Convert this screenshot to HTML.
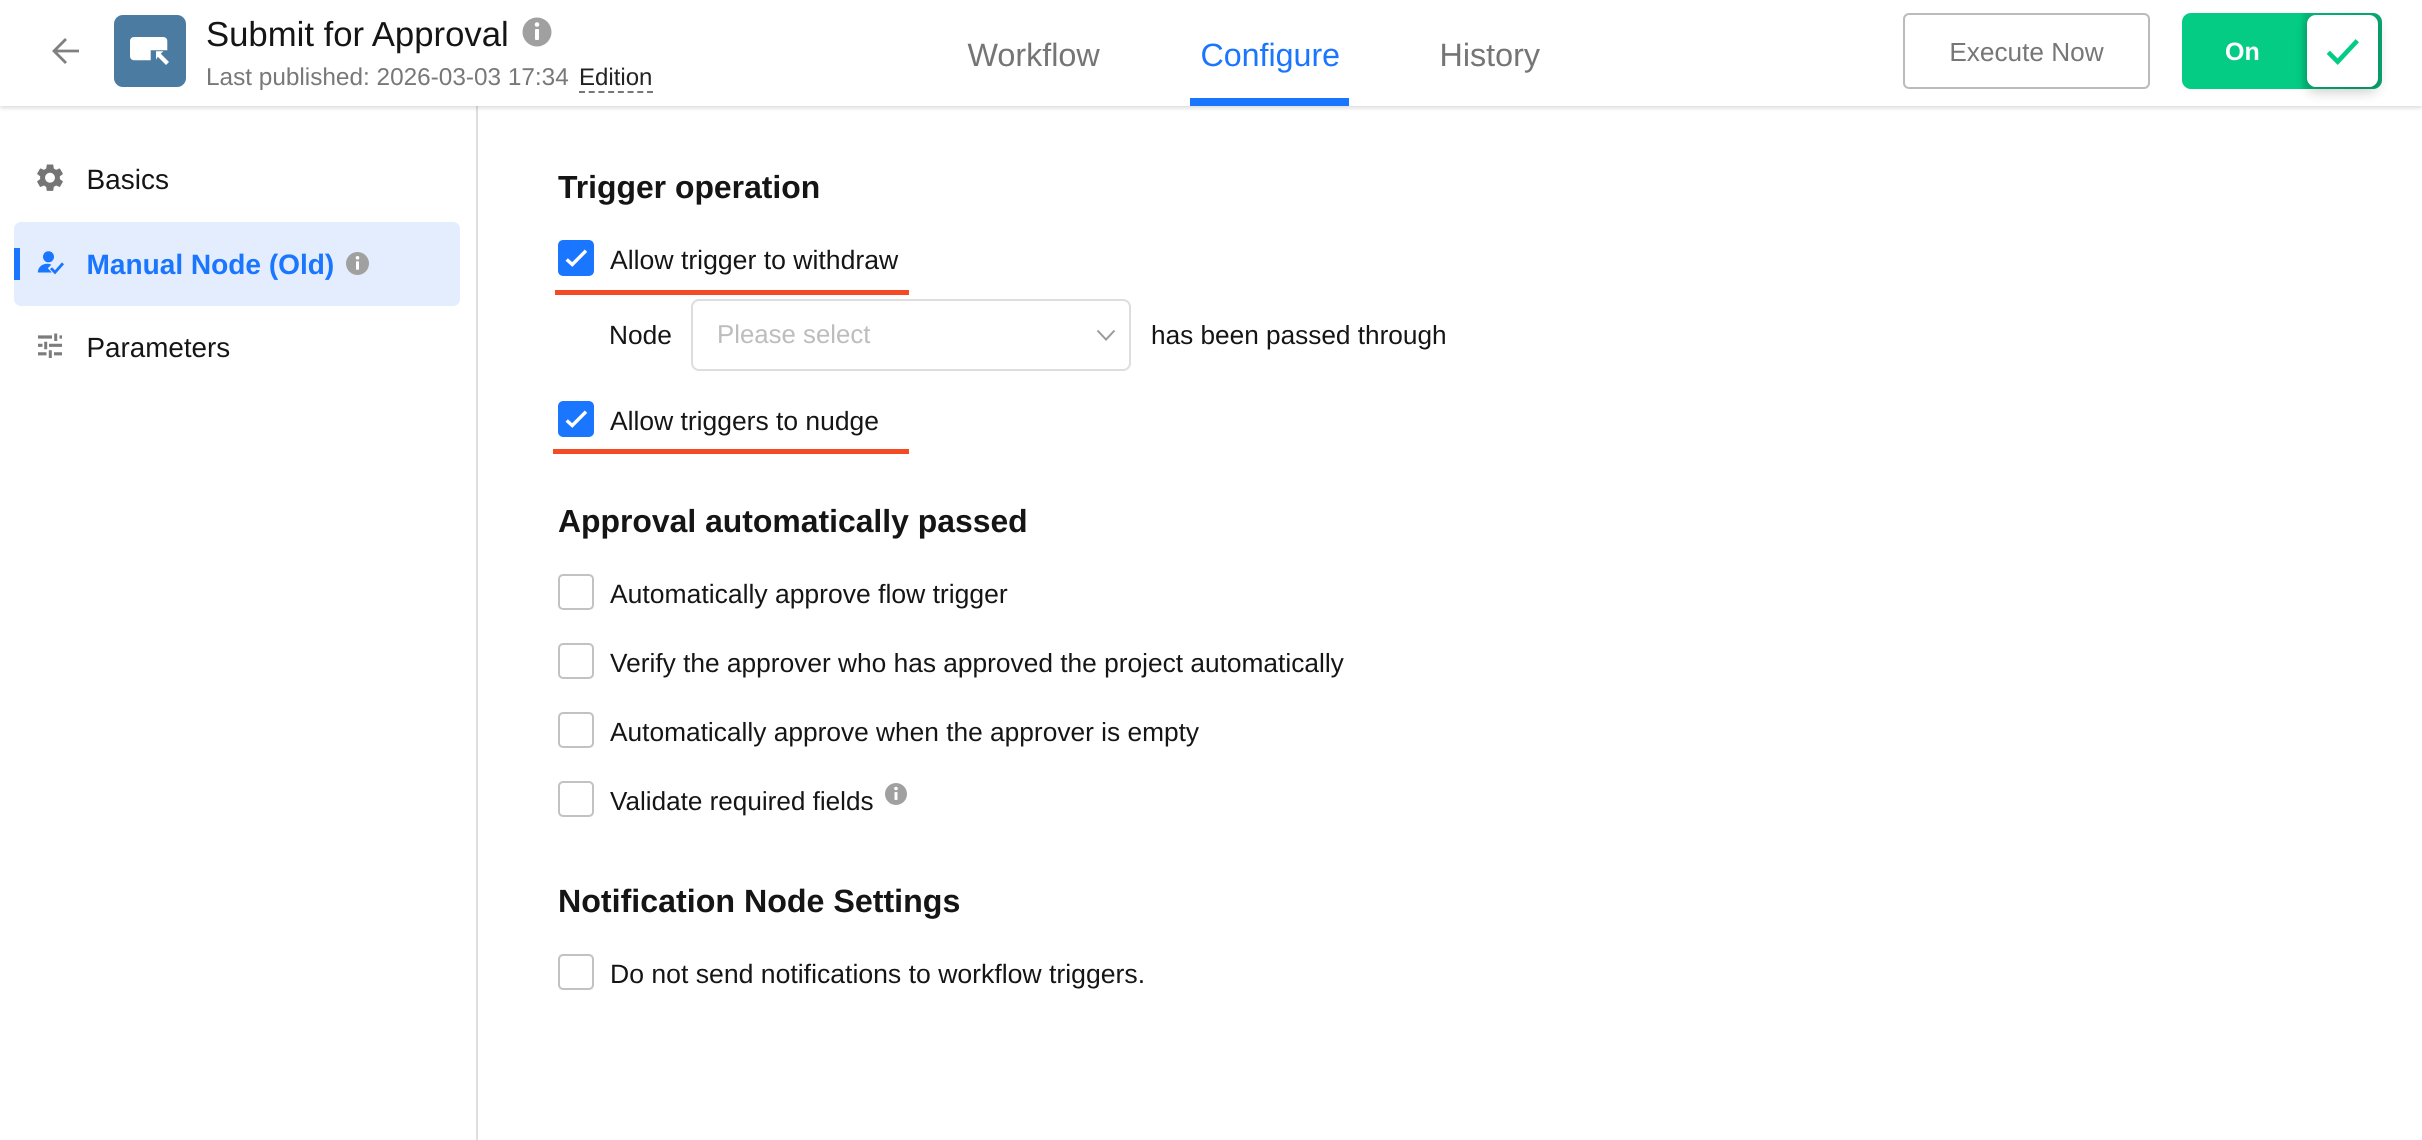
<!DOCTYPE html>
<html lang="en">
<head>
<meta charset="utf-8">
<title>Submit for Approval</title>
<style>
html,body{margin:0;padding:0;background:#fff;width:2422px;height:1140px;overflow:hidden}
body{position:relative;font-family:"Liberation Sans",Arial,sans-serif;color:#151515;text-rendering:geometricPrecision;-webkit-font-smoothing:antialiased}
.t{position:absolute;line-height:0;white-space:nowrap}
.l{font-size:26.3px}
.h{font-size:31.9px;font-weight:700}
.b{position:absolute}
.cb{position:absolute;left:558px;width:36px;height:36px;box-sizing:border-box;border:2px solid #c2c2c2;border-radius:5px;background:#fff}
.cb.on{background:#1a75ff;border-color:#1a75ff}
svg{position:absolute;left:0;top:0}
</style>
</head>
<body>
<div class="b" style="left:0;top:0;width:2422px;height:106px;background:#fff;box-shadow:0 2px 4px rgba(0,0,0,.14);z-index:1"></div>
<div class="b" style="left:476px;top:106px;width:2px;height:1034px;background:#dedede"></div>

<div class="b" style="left:114px;top:15px;width:72px;height:72px;border-radius:9px;background:#4b7ba1;z-index:2"></div>
<div class="t" style="z-index:2;left:206px;top:34.7px;font-size:34.7px">Submit for Approval</div>
<div class="t" style="z-index:2;left:206px;top:78.2px;font-size:24.35px;color:#787878">Last published: 2026-03-03 17:34</div>
<div class="t" style="z-index:2;left:579px;top:78.2px;font-size:24px;color:#222">Edition</div>
<div class="b" style="z-index:2;left:579px;top:91px;width:74px;height:0;border-top:2px dashed #777"></div>

<div class="t" style="z-index:2;left:967.500px;top:54.8px;font-size:32.3px;color:#757575">Workflow</div>
<div class="t" style="z-index:2;left:1200.500px;top:54.8px;font-size:32.2px;color:#1a75ff">Configure</div>
<div class="t" style="z-index:2;left:1439.500px;top:54.8px;font-size:32.3px;color:#757575">History</div>
<div class="b" style="z-index:2;left:1190px;top:98px;width:159px;height:8px;background:#1a75ff"></div>

<div class="b" style="z-index:2;left:1903px;top:13px;width:247px;height:76px;box-sizing:border-box;border:2px solid #bbb;border-radius:6px;background:#fff;color:#777;font-size:26.2px;line-height:74px;text-align:center">Execute Now</div>
<div class="b" style="z-index:2;left:2182px;top:13px;width:200px;height:76px;border-radius:9px;background:linear-gradient(90deg,#04cc84 0,#04cc84 118px,#05b878 124px,#0ba674 200px)"></div>
<div class="t" style="z-index:2;left:2225px;top:52px;font-size:25px;font-weight:700;color:#fff">On</div>
<div class="b" style="z-index:2;left:2307px;top:15px;width:71px;height:72px;border-radius:9px;background:#fff;box-shadow:0 5px 12px rgba(0,0,0,.2)"></div>

<div class="t" style="left:86.500px;top:180.4px;font-size:28px">Basics</div>
<div class="b" style="left:14px;top:222px;width:446px;height:84px;border-radius:7px;background:#e3edfd"></div>
<div class="b" style="left:14px;top:248px;width:6px;height:32px;background:#1a75ff"></div>
<div class="t" style="left:86.500px;top:264.6px;font-size:28.05px;font-weight:700;color:#1a75ff">Manual Node (Old)</div>
<div class="t" style="left:86.500px;top:348.4px;font-size:27.8px">Parameters</div>

<div class="t h" style="left:558px;top:187.1px">Trigger operation</div>
<div class="cb on" style="top:240px"></div>
<div class="t l" style="left:610px;top:260.2px;font-size:26.6px">Allow trigger to withdraw</div>
<div class="b" style="left:555px;top:290px;width:354px;height:5px;background:#f44b24"></div>
<div class="t l" style="left:609px;top:335.4px">Node</div>
<div class="b" style="left:691px;top:299px;width:440px;height:72px;box-sizing:border-box;border:2px solid #ddd;border-radius:8px;background:#fff"></div>
<div class="t l" style="left:717px;top:335.4px;color:#bdbdbd;font-size:25.8px">Please select</div>
<div class="t l" style="left:1151px;top:335.4px;font-size:26.2px">has been passed through</div>
<div class="cb on" style="top:401px"></div>
<div class="t l" style="left:610px;top:421.2px;font-size:26.45px">Allow triggers to nudge</div>
<div class="b" style="left:553px;top:449px;width:356px;height:5px;background:#f44b24"></div>

<div class="t h" style="left:558px;top:521.1px">Approval automatically passed</div>
<div class="cb" style="top:574px"></div>
<div class="t l" style="left:610px;top:594.2px;font-size:26.5px">Automatically approve flow trigger</div>
<div class="cb" style="top:643px"></div>
<div class="t l" style="left:610px;top:663.2px">Verify the approver who has approved the project automatically</div>
<div class="cb" style="top:712px"></div>
<div class="t l" style="left:610px;top:732.2px">Automatically approve when the approver is empty</div>
<div class="cb" style="top:781px"></div>
<div class="t l" style="left:610px;top:801.2px;font-size:26.1px">Validate required fields</div>

<div class="t h" style="left:558px;top:901.1px;font-size:32.2px">Notification Node Settings</div>
<div class="cb" style="top:954px"></div>
<div class="t l" style="left:610px;top:973.8px;font-size:26.6px">Do not send notifications to workflow triggers.</div>

<svg width="2422" height="1140" viewBox="0 0 2422 1140" style="z-index:3" fill="none">
  <path d="M79 51H55M66 39L54 51L66 63" stroke="#808080" stroke-width="2.800"/>
  <path d="M134 37H163.300a4 4 0 0 1 4 4V50.300H150.700V60.300H134a4 4 0 0 1-4-4V41a4 4 0 0 1 4-4z" fill="#fff"/>
  <path d="M156 51.300H163.300L160.800 53.800L169 62L166 65L157.800 56.800L156 59.700z" fill="#fff"/>
  <circle cx="537" cy="32" r="14.500" fill="#a0a0a0"/>
  <circle cx="537" cy="24.500" r="2.300" fill="#fff"/><rect x="535" y="29" width="4" height="11" rx="1" fill="#fff"/>
  <path d="M2328.300 52.300L2337.700 61.700L2357.300 40.700" stroke="#04cc84" stroke-width="4.600"/>
  <g transform="translate(33.500 161.200) scale(1.375)"><path fill="#757575" d="M19.14 12.94c.04-.3.06-.61.06-.94 0-.32-.02-.64-.07-.94l2.030-1.580c.18-.14.23-.41.12-.61l-1.920-3.320c-.12-.22-.37-.29-.59-.22l-2.390.96c-.5-.38-1.030-.7-1.620-.94l-.36-2.540c-.04-.24-.24-.41-.48-.41h-3.840c-.24 0-.43.17-.47.41l-.36 2.540c-.59.24-1.130.57-1.620.94l-2.390-.96c-.22-.08-.47 0-.59.22L2.740 8.870c-.12.21-.08.47.12.61l2.030 1.580c-.05.3-.09.63-.09.94s.02.64.07.94l-2.030 1.580c-.18.14-.23.41-.12.61l1.920 3.320c.12.22.37.29.59.22l2.390-.96c.5.38 1.030.7 1.620.94l.36 2.540c.05.24.24.41.48.41h3.840c.24 0 .44-.17.47-.41l.36-2.540c.59-.24 1.130-.56 1.620-.94l2.390.96c.22.08.47 0 .59-.22l1.920-3.320c.12-.22.07-.47-.12-.61l-2.010-1.580zM12 15.600c-1.980 0-3.600-1.620-3.600-3.600s1.620-3.600 3.600-3.600 3.600 1.620 3.600 3.600-1.620 3.600-3.600 3.600z"/></g>
  <circle cx="48.500" cy="256.800" r="5.500" fill="#1a75ff"/>
  <path d="M37.800 272.500C38 267 42.500 263.800 47 263.800C48.600 263.800 50 264.100 51.300 264.700L47.800 268.300L51.800 272.500z" fill="#1a75ff"/>
  <path d="M51 268.300L55 272.300L63 263.300" stroke="#1a75ff" stroke-width="2.800"/>
  <circle cx="357.500" cy="263.500" r="11.500" fill="#a0a0a0"/>
  <circle cx="357.500" cy="257.800" r="1.800" fill="#fff"/><rect x="356" y="261.300" width="3" height="8.500" rx=".8" fill="#fff"/>
  <path d="M38 337H52M59.500 337H62M38 345.300H42.500M49 345.300H62M38 353.800H46.500M54 353.800H62" stroke="#7c7c7c" stroke-width="3.200"/>
  <path d="M55.700 333.500V341M45.700 341.800V349.300M50.300 350.300V358" stroke="#7c7c7c" stroke-width="3"/>
  <path d="M566.700 259.500L572.300 264.500L586 250.700" stroke="#fff" stroke-width="3.400"/>
  <path d="M566.700 420.500L572.300 425.500L586 411.700" stroke="#fff" stroke-width="3.400"/>
  <path d="M1097.500 330.500L1106 339.500L1114.500 330.500" stroke="#9a9a9a" stroke-width="2"/>
  <circle cx="896" cy="794" r="11" fill="#a0a0a0"/>
  <circle cx="896" cy="788.500" r="1.800" fill="#fff"/><rect x="894.500" y="792" width="3" height="8" rx=".8" fill="#fff"/>
</svg>
</body>
</html>
